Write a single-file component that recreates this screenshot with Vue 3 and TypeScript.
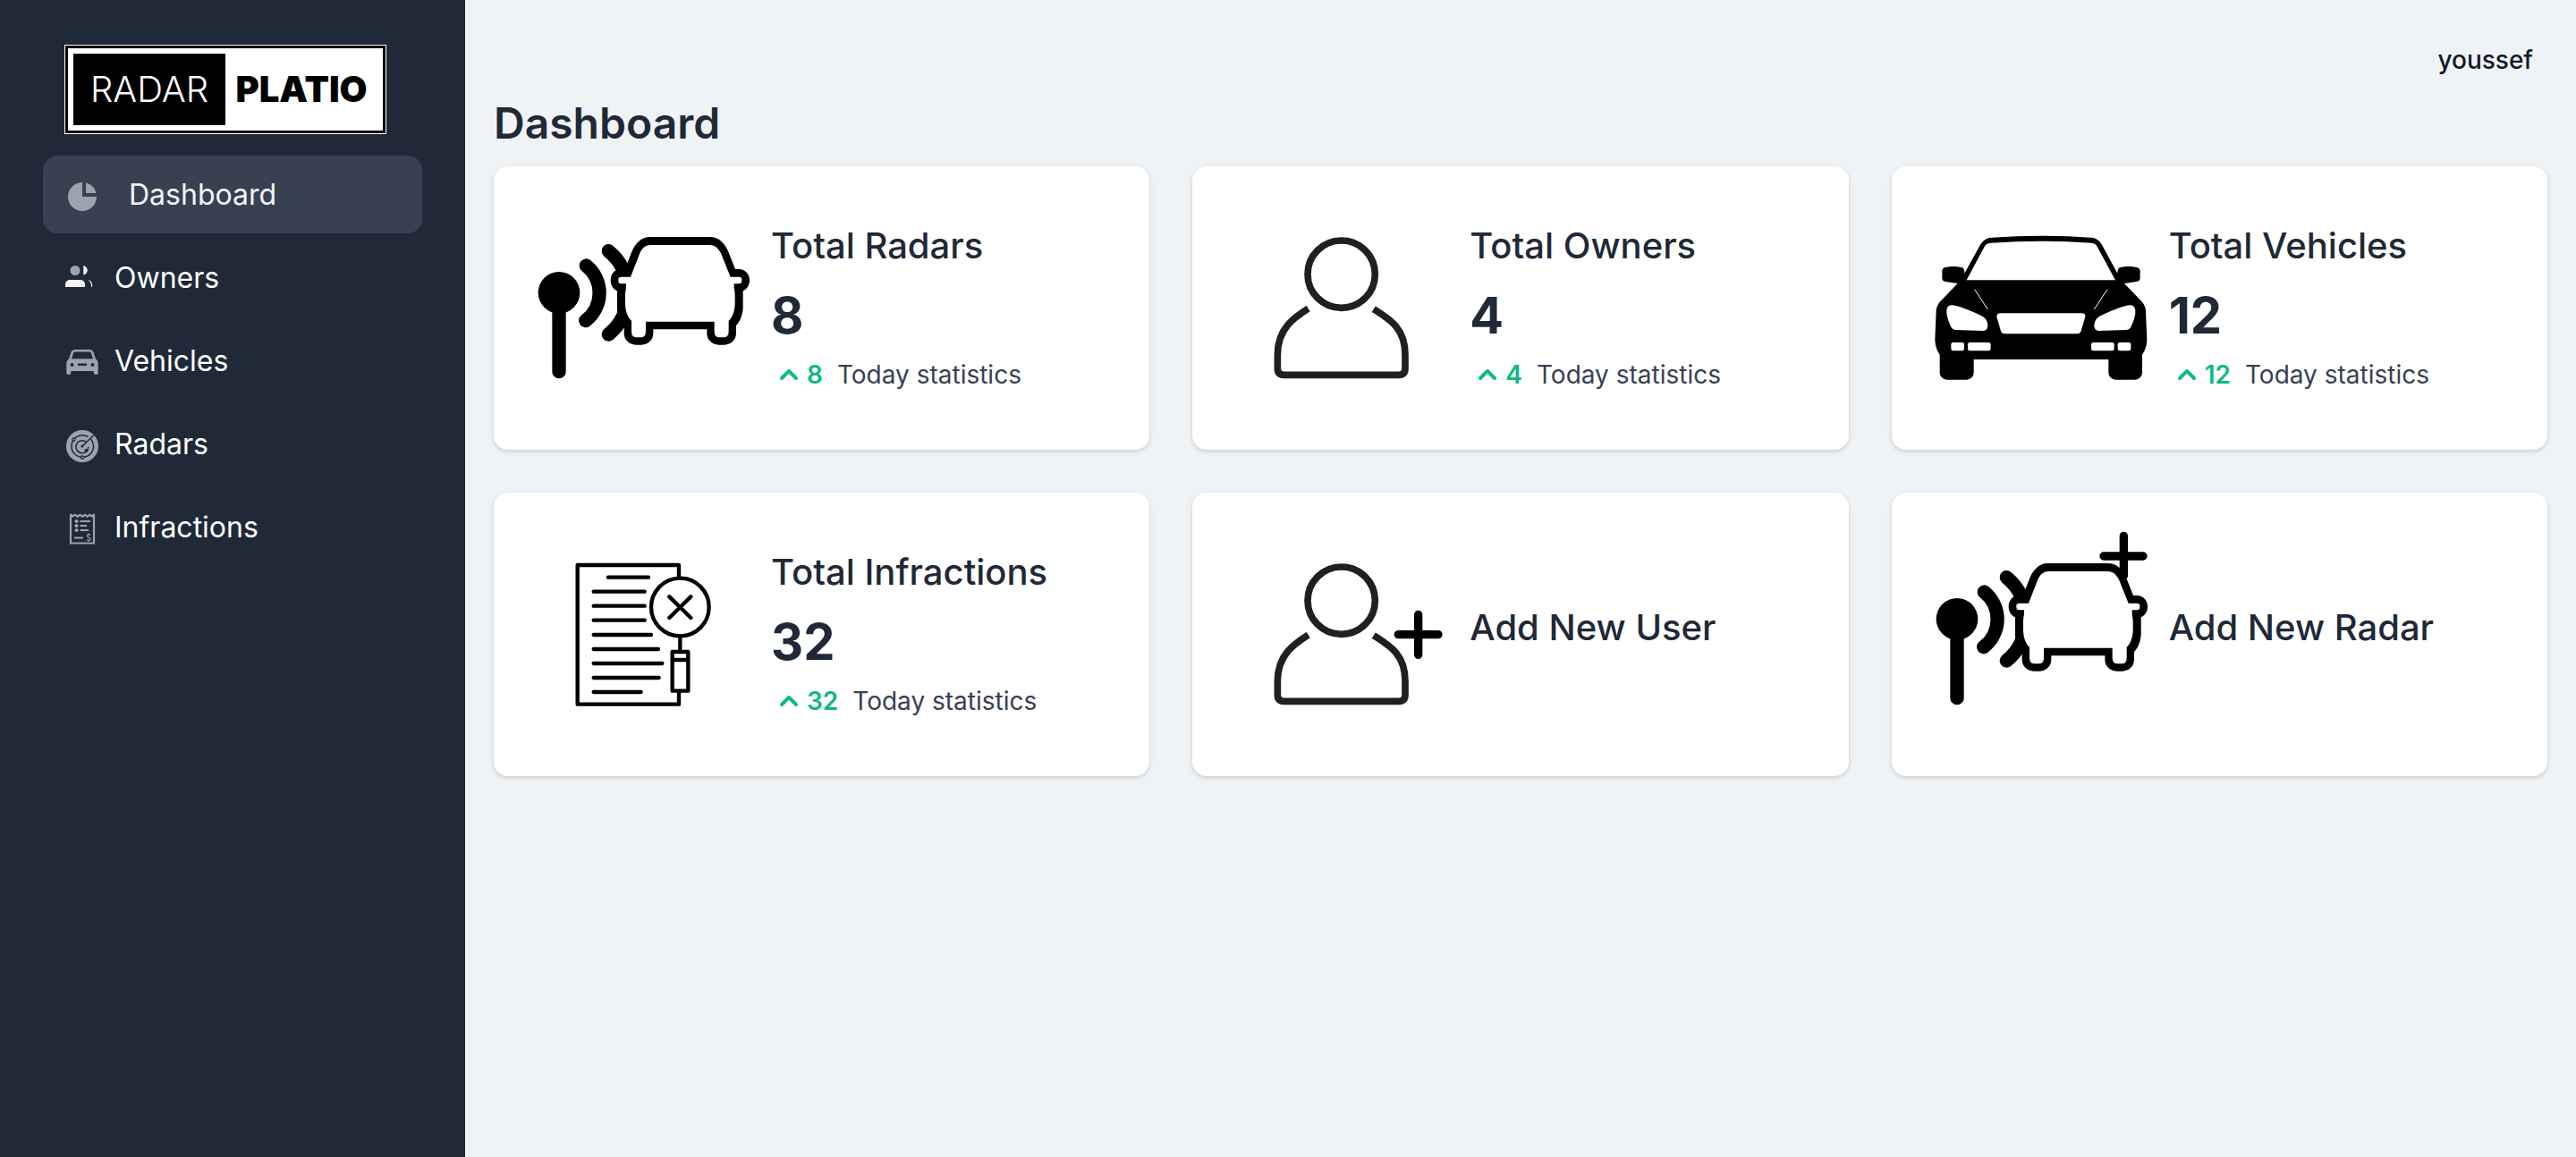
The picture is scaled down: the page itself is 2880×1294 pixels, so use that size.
<script setup lang="ts">
interface NavItem {
  label: string
  icon: 'pie' | 'people' | 'car' | 'radar' | 'receipt'
  active?: boolean
}

interface Card {
  title: string
  art: 'radar' | 'owner' | 'vehicle' | 'infraction' | 'add-owner' | 'add-radar'
  total?: number
}

const navItems: NavItem[] = [
  { label: 'Dashboard', icon: 'pie', active: true },
  { label: 'Owners', icon: 'people' },
  { label: 'Vehicles', icon: 'car' },
  { label: 'Radars', icon: 'radar' },
  { label: 'Infractions', icon: 'receipt' },
]

const cards: Card[] = [
  { title: 'Total Radars', art: 'radar', total: 8 },
  { title: 'Total Owners', art: 'owner', total: 4 },
  { title: 'Total Vehicles', art: 'vehicle', total: 12 },
  { title: 'Total Infractions', art: 'infraction', total: 32 },
  { title: 'Add New User', art: 'add-owner' },
  { title: 'Add New Radar', art: 'add-radar' },
]

const viewBoxes: Record<Card['art'], string> = {
  radar: '30 30 714 567',
  'add-radar': '30 30 714 567',
  owner: '-56 30 714 567',
  'add-owner': '-56 30 714 567',
  vehicle: '68 30 714 567',
  infraction: '-60 15 714 567',
}
</script>

<template>
  <div class="layout">
    <aside class="sidebar">
      <a class="logo" href="#" aria-label="Radar Platio">
        <span class="logo-frame">
          <span class="logo-dark">RADAR</span>
          <span class="logo-light">PLATIO</span>
        </span>
      </a>
      <nav class="nav">
        <a
          v-for="item in navItems"
          :key="item.label"
          href="#"
          class="nav-item"
          :class="{ active: item.active }"
        >
          <svg class="nav-icon" viewBox="0 0 40 40" aria-hidden="true">
            <g v-if="item.icon === 'pie'" transform="scale(2)">
              <path d="M2 10a8 8 0 018-8v8h8a8 8 0 11-16 0z" />
              <path d="M12 2.252A8.014 8.014 0 0117.748 8H12V2.252z" />
            </g>
            <g v-else-if="item.icon === 'people'">
              <circle cx="12" cy="9.500" r="5.500" />
              <path class="bright" d="M21.300 4c2.600.6 4.400 2.700 4.400 5.300s-1.800 4.700-4.400 5.300z" />
              <path class="bright" d="M1 28v-3c0-3 2.500-5 5.500-5h11c3 0 5.500 2 5.500 5v3z" />
              <path class="bright" d="M26.800 20c2.800.8 4.400 3 4.400 6v2h-1c0-3.200-1-5.600-3.400-8z" />
            </g>
            <g v-else-if="item.icon === 'car'">
              <path
                fill-rule="evenodd"
                d="M12 5h16c2.500 0 4 1.300 4.700 3.500L35 15.500c2 1.200 2.700 3 2.700 5.500v9.500a2.500 2.500 0 0 1-5 0V29H7.300v1.500a2.500 2.500 0 0 1-5 0V21c0-2.500.7-4.300 2.700-5.500l2.300-7C8 6.300 9.500 5 12 5zm.5 2.600c-1.500 0-2.200.6-2.600 2L8 15.200h24l-1.900-5.600c-.4-1.400-1.100-2-2.600-2zM8.500 20a2 2 0 1 0 0 4 2 2 0 0 0 0-4zm23 0a2 2 0 1 0 0 4 2 2 0 0 0 0-4zm-15.500.5a1.100 1.100 0 0 0 0 2.400h8a1.100 1.100 0 0 0 0-2.400z"
              />
            </g>
            <g v-else-if="item.icon === 'radar'">
              <circle cx="20" cy="20" r="18" />
              <g class="cut">
                <path d="M29.500 12a12.300 12.300 0 1 1-3-2.500" />
                <path d="M24.500 15.500a7 7 0 1 0 2.300 5.500" />
                <path d="M20 20L33 7.500" />
              </g>
              <circle class="dot" cx="20" cy="20" r="1.600" />
              <circle class="dot" cx="24.500" cy="25" r="2" />
              <circle class="ring" cx="10.500" cy="12.500" r="1.600" />
              <circle class="ring" cx="20" cy="32.500" r="1.600" />
            </g>
            <g v-else class="receipt">
              <path d="M7 3v32.500h26V3M6.500 3l2.500 2.500L12 3.800l2.800 1.800 2.700-1.800 2.700 1.800 2.800-1.800 2.700 1.800L28.500 3.800l2.500 1.700L33.500 3" />
              <path d="M11.500 11h4M13.500 9v4M17.500 11h11.500M11.500 16h4M13.500 14v4M17.500 16h7.500M11.500 21h4M13.500 19v4M17.500 21h9.500M11 29.500h10" />
              <path class="thin" d="M28.800 26.500q-2-1.500-3 0t1.400 2.700q2.400 1.200 1.200 2.600t-3.200 0M27.200 24.500v1.500M27.200 32.500v1.300" />
            </g>
          </svg>
          <span class="nav-label">{{ item.label }}</span>
        </a>
      </nav>
    </aside>

    <main class="main">
      <header class="topbar">
        <button type="button" class="user">youssef</button>
      </header>
      <h1 class="page-title">Dashboard</h1>
      <section class="cards">
        <component
          :is="card.total === undefined ? 'a' : 'article'"
          v-for="card in cards"
          :key="card.title"
          :href="card.total === undefined ? '#' : undefined"
          class="card"
        >
          <svg class="art" :viewBox="viewBoxes[card.art]" aria-hidden="true">
            <g v-if="card.art === 'radar' || card.art === 'add-radar'">
              <circle cx="105" cy="262" r="70" />
              <g class="wave">
                <path d="M105 300V527" />
                <path d="M196 171A117 117 0 0 1 194 356" />
                <path d="M271 122A180 180 0 0 1 271 402" />
              </g>
              <path
                v-if="card.art === 'add-radar'"
                class="plus"
                d="M664 -17V117M597 51H729"
              />
              <path
                d="M410 75H612C640 75 660 95 672 122L696 183H708C730 183 744 200 744 220C744 238 735 250 722 256V315C720 340 712 358 699 372V398A39 39 0 0 1 660 437H640A39 39 0 0 1 601 398V385H421V398A39 39 0 0 1 382 437H362A39 39 0 0 1 323 398V366C308 350 300 335 300 315V256C287 250 278 238 278 220C278 204 286 190 300 185L326 183L350 122C362 95 382 75 410 75Z"
              />
              <path
                class="paper"
                d="M412 102H610C628 102 641 114 649 132L680 209H708Q718 209 718 217V222Q718 232 708 232H692V247C696 262 695 280 695 300C694 325 687 345 674 356V392Q674 412 656 412H644Q626 412 626 392V359H396V392Q396 412 378 412H366Q348 412 348 392V356C335 345 328 325 327 300C327 280 326 262 330 247V232H314Q304 232 304 222V217Q304 209 314 209H345L375 132C382 114 394 102 412 102Z"
              />
            </g>
            <g v-else-if="card.art === 'owner' || card.art === 'add-owner'">
              <g class="person">
                <circle cx="300" cy="200" r="113" />
                <path
                  d="M189 315C145 343 86 380 86 470V516Q86 538 108 538H492Q514 538 514 516V470C514 380 460 350 408 317"
                />
              </g>
              <path v-if="card.art === 'add-owner'" class="plus" d="M558 247V382M491 314H625" />
            </g>
            <g v-else-if="card.art === 'vehicle'">
              <path
                d="M145 231L85 293Q73 308 73 325L69 420Q70 450 85 470V530A24 24 0 0 0 109 554H175A24 24 0 0 0 199 530V486H651V530A24 24 0 0 0 675 554H740A24 24 0 0 0 764 530V470Q779 450 780 420L776 325Q776 308 764 293L704 231L745 225Q757 223 757 212V190Q757 179 745 177Q718 171 691 177Q681 178 681 197L628 100Q615 77 592 77Q424 65 260 77Q235 77 222 100L168 197Q168 178 158 177Q130 171 104 177Q93 179 93 190V212Q93 223 104 225Z"
              />
              <g class="paper">
                <path d="M175 220L236 106Q242 95 258 95Q424 83 592 95Q606 95 612 106L674 220Z" />
                <path d="M288 331H561Q575 331 573 343L559 390Q556 400 546 400H303Q293 400 290 391L276 343Q276 331 288 331Z" />
                <g v-for="side in ['', 'translate(849) scale(-1 1)']" :key="side" :transform="side">
                  <path d="M108 330Q106 304 125 304Q155 306 228 341Q246 352 246 372Q246 388 232 390L140 387Q127 387 122 375Q110 350 108 330Z" />
                  <rect x="123" y="429" width="44" height="28" rx="7" />
                  <rect x="179" y="429" width="77" height="28" rx="7" />
                  <path class="crease" d="M202 251L246 318" />
                </g>
              </g>
            </g>
            <g v-else class="sheet">
              <path d="M417 105V66H77V533H417V490" />
              <path
                d="M180 107H315M131 155H302M131 203H302M131 251H302M131 300H324M131 348H348M131 396H361M131 444H350M131 492H290"
              />
              <circle cx="421" cy="207" r="97" />
              <path d="M385 172L457 243M457 172L385 243M421 304V357M395 357H448V488H395ZM395 384H448" />
            </g>
          </svg>
          <div class="card-body">
            <h2 class="card-title">{{ card.title }}</h2>
            <template v-if="card.total !== undefined">
              <p class="total">{{ card.total }}</p>
              <p class="stat">
                <svg class="chevron" viewBox="0 0 20 20" aria-hidden="true">
                  <path
                    d="M14.707 12.707a1 1 0 01-1.414 0L10 9.414l-3.293 3.293a1 1 0 01-1.414-1.414l4-4a1 1 0 011.414 0l4 4a1 1 0 010 1.414z"
                  />
                </svg>
                <strong class="delta">{{ card.total }}</strong>
                <span>Today statistics</span>
              </p>
            </template>
          </div>
        </component>
      </section>
    </main>
  </div>
</template>

<style>
body {
  margin: 0;
  background: #eff3f6;
}
</style>

<style scoped>
.layout {
  display: flex;
  min-height: 100vh;
  background: #eff3f6;
  color: #1f2937;
  font-family: Inter, 'Liberation Sans', sans-serif;
}

.layout * {
  box-sizing: border-box;
}

.sidebar {
  flex: none;
  width: 520px;
  padding: 50px 48px;
  background: #1f2937;
}

.logo {
  display: block;
  width: 360px;
  margin: 0 24px 24px;
  border: 1px solid #fff;
  text-decoration: none;
}

.logo-frame {
  display: flex;
  height: 98px;
  padding: 6px;
  border: 3px solid #000;
  background: #fff;
}

.logo-dark,
.logo-light {
  display: flex;
  align-items: center;
  justify-content: center;
  font-size: 40px;
  line-height: 48px;
}

.logo-dark {
  width: 170px;
  background: #000;
  color: #fff;
  font-weight: 300;
}

.logo-light {
  flex: 1;
  color: #000;
  font-weight: 900;
}

.nav {
  display: flex;
  flex-direction: column;
  gap: 6px;
}

.nav-item {
  display: flex;
  align-items: center;
  gap: 16px;
  height: 87px;
  padding: 0 24px;
  border-radius: 16px;
  color: #fff;
  font-size: 32px;
  line-height: 48px;
  text-decoration: none;
}

.nav-item.active {
  gap: 32px;
  background: #374151;
  color: #f3f4f6;
}

.nav-icon {
  width: 40px;
  height: 40px;
  margin-top: 4px;
  fill: #9ca3af;
}

.bright {
  fill: #f3f4f6;
}

.cut {
  fill: none;
  stroke: #1f2937;
  stroke-width: 1.5;
}

.dot {
  fill: #1f2937;
}

.ring {
  stroke: #1f2937;
  stroke-width: 1.2;
}

.receipt {
  fill: none;
  stroke: #9ca3af;
  stroke-width: 2.2;
}

.thin {
  stroke-width: 1.3;
}

.main {
  flex: 1;
  min-width: 0;
  padding: 48px 32px;
}

.topbar {
  display: flex;
  justify-content: flex-end;
  padding: 0 16px;
  margin-bottom: 24px;
}

.user {
  padding: 0;
  border: 0;
  background: none;
  color: #111827;
  font-family: inherit;
  font-size: 28px;
  font-weight: 500;
  line-height: 38px;
}

.page-title {
  margin: 0 0 20px;
  font-size: 48px;
  font-weight: 600;
  line-height: 56px;
}

.cards {
  display: grid;
  grid-template-columns: repeat(3, 1fr);
  gap: 48px;
}

.card {
  display: flex;
  align-items: center;
  gap: 24px;
  padding: 64px 48px;
  border-radius: 16px;
  background: #fff;
  box-shadow: 0 2px 6px rgba(0, 0, 0, 0.1), 0 2px 4px rgba(0, 0, 0, 0.06);
  color: inherit;
  text-decoration: none;
}

.art {
  flex: none;
  width: 238px;
  height: 189px;
  overflow: visible;
}

.wave {
  fill: none;
  stroke: #000;
  stroke-width: 46;
  stroke-linecap: round;
}

.paper {
  fill: #fff;
}

.plus {
  fill: none;
  stroke: #000;
  stroke-width: 28;
  stroke-linecap: round;
}

.person {
  fill: none;
  stroke: #231f20;
  stroke-width: 23;
}

.crease {
  stroke: #fff;
  stroke-width: 3;
}

.sheet {
  fill: none;
  stroke: #000;
  stroke-width: 13;
  stroke-linecap: round;
  stroke-linejoin: round;
}

.card-title {
  margin: 0 0 16px;
  font-size: 40px;
  font-weight: 500;
  line-height: 48px;
}

.total {
  margin: 0 0 8px;
  font-size: 56px;
  font-weight: 700;
  line-height: 76px;
}

.stat {
  display: flex;
  align-items: center;
  margin: 0;
  color: #374151;
  font-size: 28px;
  line-height: 40px;
}

.chevron {
  width: 40px;
  height: 40px;
  fill: #10b981;
}

.delta {
  margin-right: 16px;
  color: #10b981;
  font-weight: 600;
}
</style>
